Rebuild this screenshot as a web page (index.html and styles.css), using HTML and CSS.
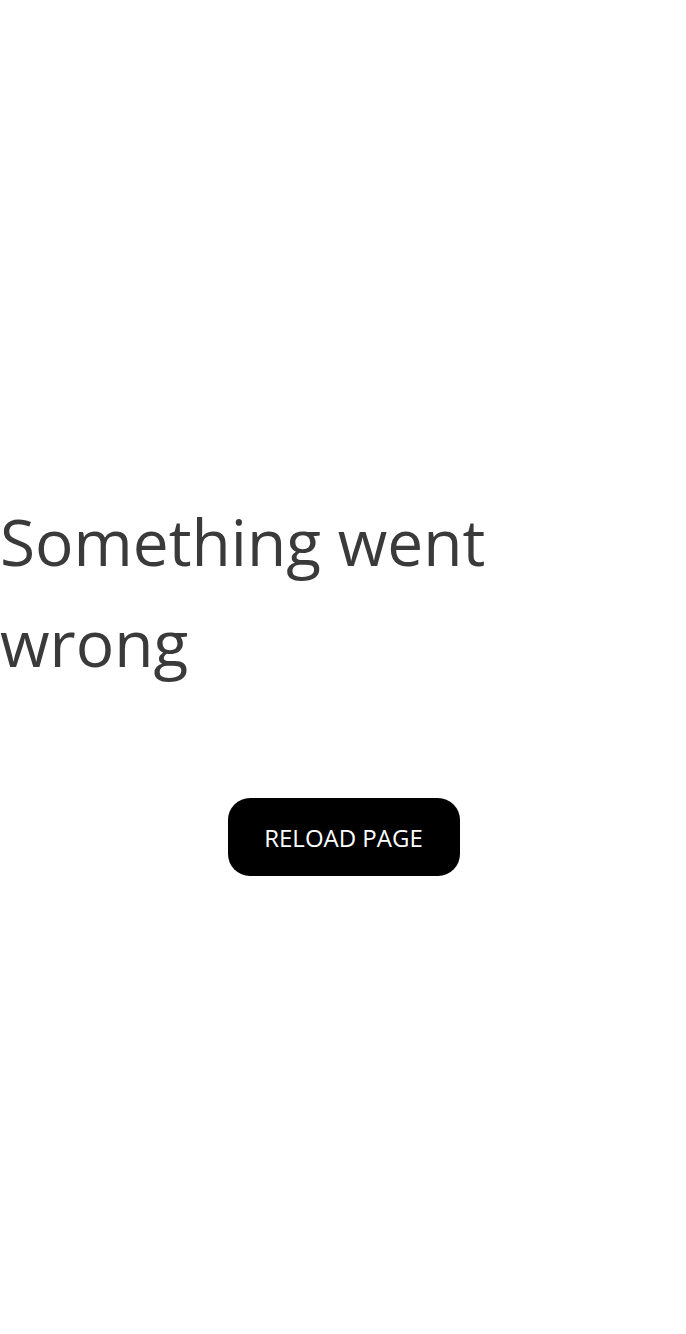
FILE: index.html
```html
<!DOCTYPE html>
<html>
<head>
<meta charset="utf-8">
<link rel="stylesheet" href="styles.css">
</head>
<body>
<main class="error">
  <h1 class="error-title">Something went wrong</h1>
  <div class="error-actions">
    <button class="reload-btn">RELOAD PAGE</button>
  </div>
</main>
</body>
</html>
```
FILE: styles.css
```css
html, body {
  margin: 0;
  padding: 0;
  background: #ffffff;
}
body {
  width: 686px;
  height: 1334px;
  font-family: "Open Sans", "Liberation Sans", sans-serif;
}
.error {
  padding-top: 491px;
  display: flex;
  flex-direction: column;
}
.error-title {
  margin: 0;
  font-size: 64px;
  font-weight: 400;
  line-height: 101px;
  color: #3a3a3a;
}
.error-actions {
  display: flex;
  justify-content: center;
  margin-top: 105px;
}
.reload-btn {
  width: 232px;
  height: 78px;
  margin-left: 1px;
  border: none;
  border-radius: 22px;
  background: #000000;
  color: #ffffff;
  font-family: "Open Sans", "Liberation Sans", sans-serif;
  font-size: 24px;
  padding: 0;
}
```
